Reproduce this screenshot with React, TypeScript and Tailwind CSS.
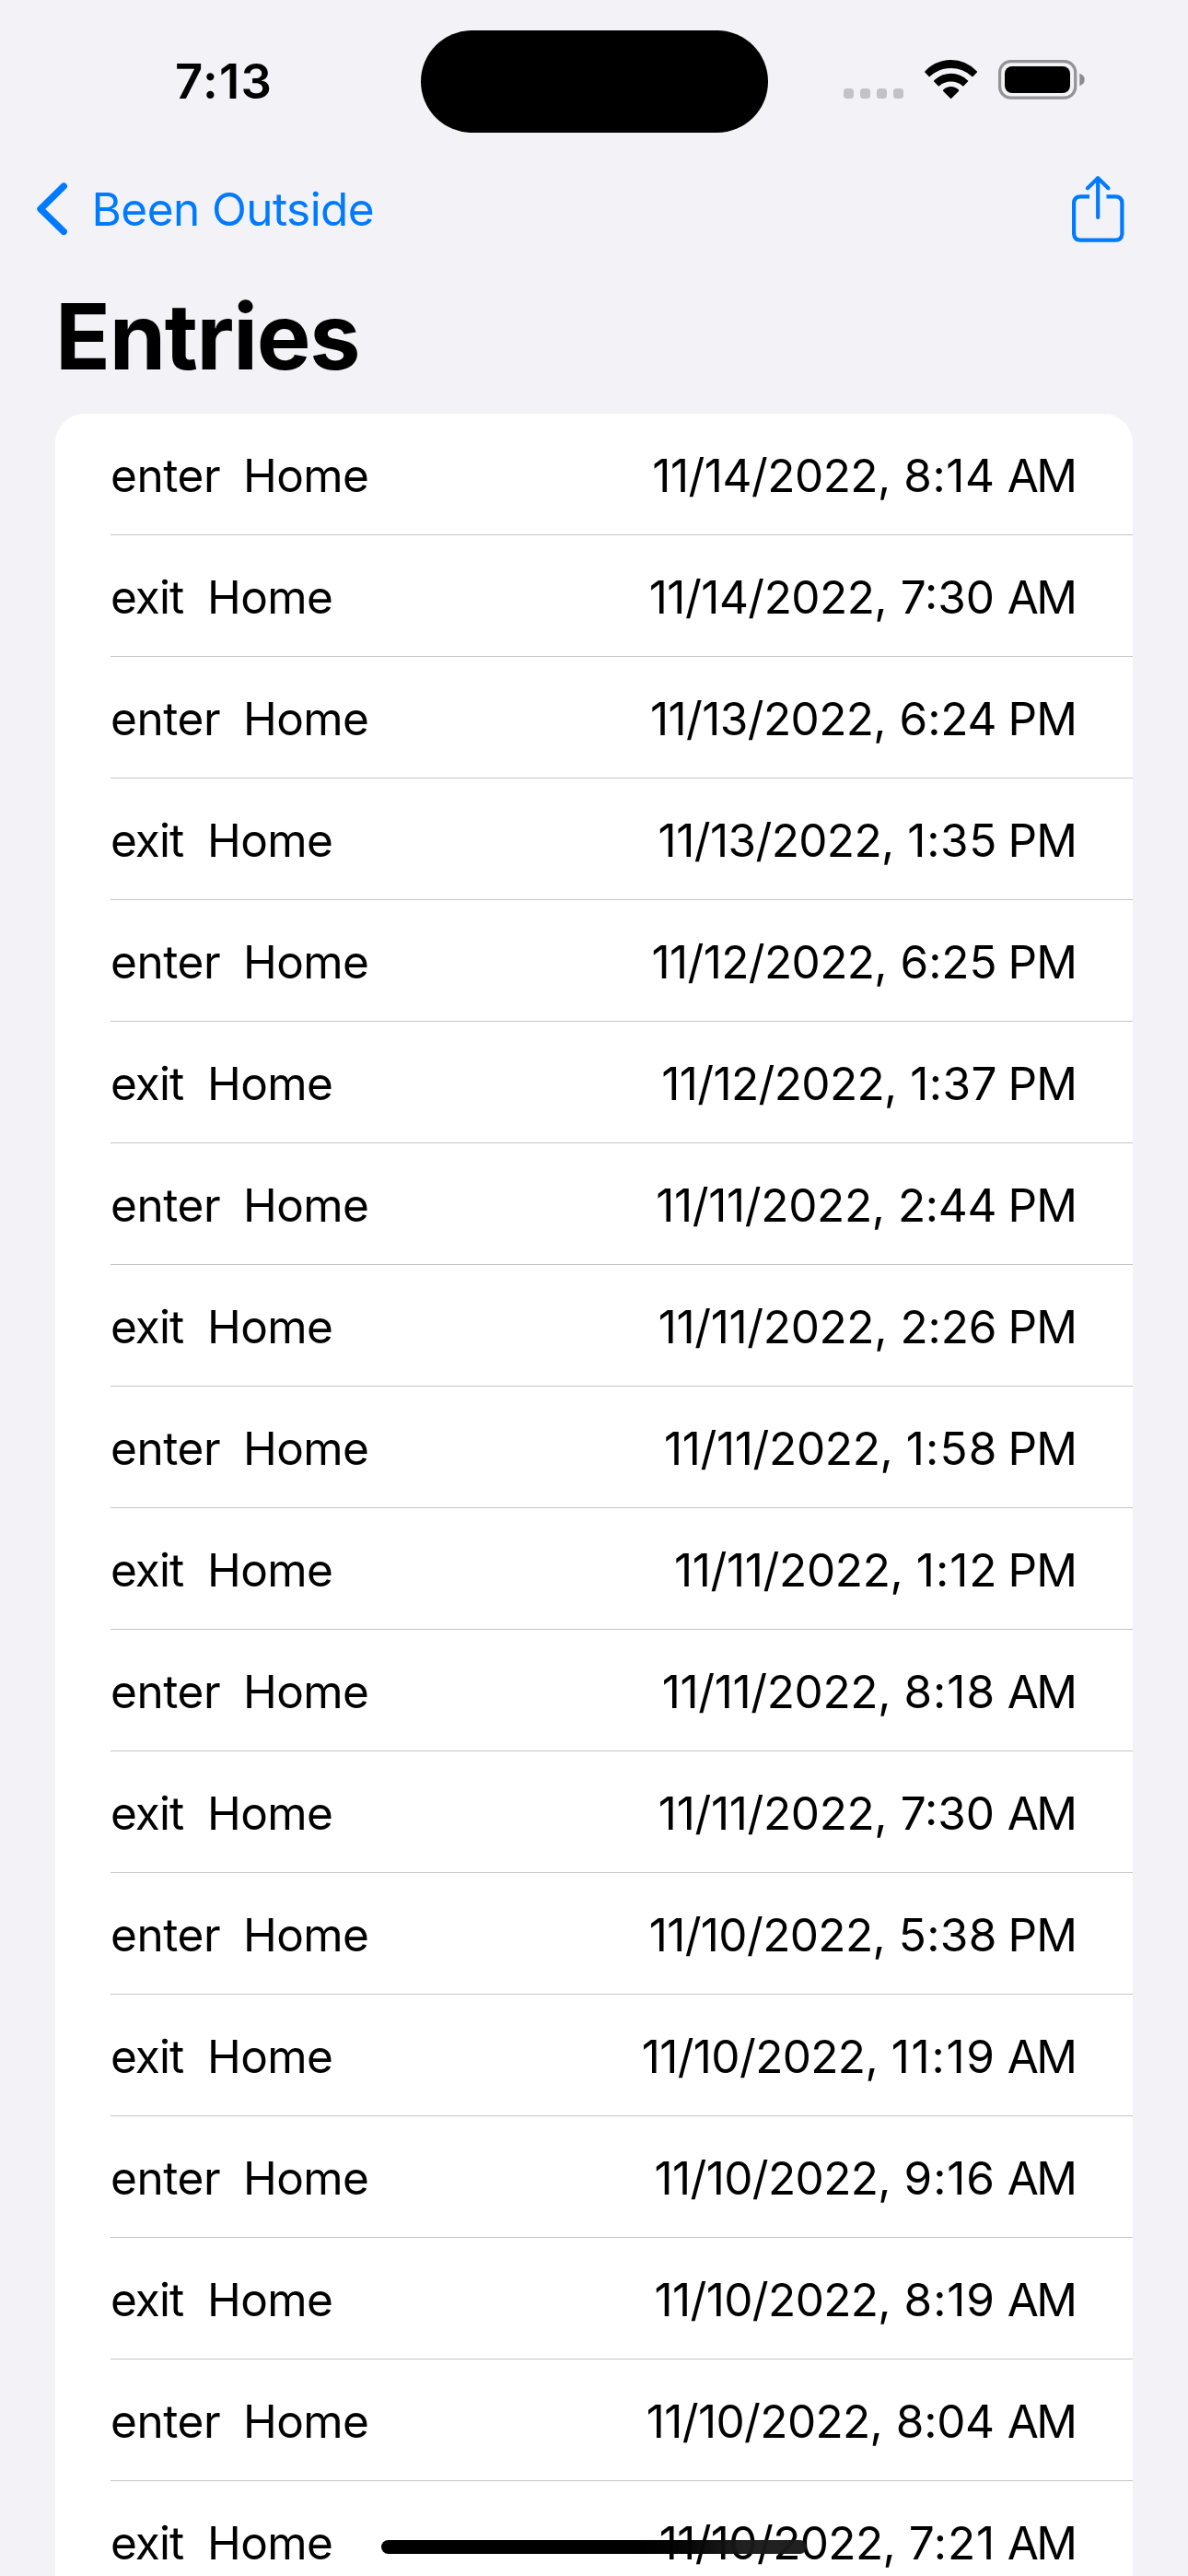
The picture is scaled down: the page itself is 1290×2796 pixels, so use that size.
type Action = "enter" | "exit";
type Meridiem = "AM" | "PM";

interface Entry {
  action: Action;
  day: string;
  time: string;
  meridiem: Meridiem;
  /** tracking of the time in px */
  tracking: number;
}

const dayTracking: Record<string, number> = {
  "11/14/2022,": -0.52,
  "11/13/2022,": -0.6,
  "11/12/2022,": -0.63,
  "11/11/2022,": -0.35,
  "11/10/2022,": -0.63,
};

const entries: Entry[] = [
  { action: "enter", day: "11/14/2022,", time: "8:14", meridiem: "AM", tracking: 0.6 },
  { action: "exit", day: "11/14/2022,", time: "7:30", meridiem: "AM", tracking: 0 },
  { action: "enter", day: "11/13/2022,", time: "6:24", meridiem: "PM", tracking: -0.15 },
  { action: "exit", day: "11/13/2022,", time: "1:35", meridiem: "PM", tracking: 0.7 },
  { action: "enter", day: "11/12/2022,", time: "6:25", meridiem: "PM", tracking: -0.1 },
  { action: "exit", day: "11/12/2022,", time: "1:37", meridiem: "PM", tracking: 0.4 },
  { action: "enter", day: "11/11/2022,", time: "2:44", meridiem: "PM", tracking: -0.3 },
  { action: "exit", day: "11/11/2022,", time: "2:26", meridiem: "PM", tracking: -0.1 },
  { action: "enter", day: "11/11/2022,", time: "1:58", meridiem: "PM", tracking: 1.2 },
  { action: "exit", day: "11/11/2022,", time: "1:12", meridiem: "PM", tracking: 1 },
  { action: "enter", day: "11/11/2022,", time: "8:18", meridiem: "AM", tracking: 1 },
  { action: "exit", day: "11/11/2022,", time: "7:30", meridiem: "AM", tracking: 0 },
  { action: "enter", day: "11/10/2022,", time: "5:38", meridiem: "PM", tracking: 0.4 },
  { action: "exit", day: "11/10/2022,", time: "11:19", meridiem: "AM", tracking: 1.75 },
  { action: "enter", day: "11/10/2022,", time: "9:16", meridiem: "AM", tracking: 0.9 },
  { action: "exit", day: "11/10/2022,", time: "8:19", meridiem: "AM", tracking: 0.9 },
  { action: "enter", day: "11/10/2022,", time: "8:04", meridiem: "AM", tracking: -0.3 },
  { action: "exit", day: "11/10/2022,", time: "7:21", meridiem: "AM", tracking: 0.8 },
];

/** Text whose trailing letter spacing is taken back, so boxes end at the last glyph. */
function Tracked({ value, text }: { value: number; text: string }) {
  return (
    <span style={{ letterSpacing: `${value}px`, marginRight: `${-value}px` }}>{text}</span>
  );
}

function StatusBar() {
  return (
    <div className="relative h-[177px] w-full shrink-0">
      <div className="flex h-[176px] items-center justify-between pr-[112px] pl-[190px]">
        <span className="text-[52.5px] leading-[64px] font-semibold tracking-[1.4px]">7:13</span>
        <div className="flex items-start pb-[3px]">
          <div className="mt-[31px] mr-[23px] flex gap-[7px]">
            {[0, 1, 2, 3].map((dot) => (
              <span key={dot} className="size-[11px] rounded-[3.5px] bg-[#c3c3c7]" />
            ))}
          </div>
          <svg width="58" height="43" viewBox="1004 65 58 43" className="mr-[22px]">
            <path d="M1004.3 77.4 Q1016.5 65 1032.6 65 Q1048.7 65 1060.9 77.4 Q1061.4 78 1060.9 78.6 L1056.5 83 Q1056 83.5 1055.4 83 Q1045.6 74 1032.6 74 Q1019.6 74 1009.8 83 Q1009.2 83.5 1008.7 83 L1004.3 78.6 Q1003.8 78 1004.3 77.4Z" />
            <path d="M1014.2 87.4 Q1022 79.7 1032.6 79.7 Q1043.2 79.7 1051 87.4 Q1051.6 88 1051 88.6 L1046.4 93.2 Q1045.8 93.8 1045.2 93.2 Q1039.8 88.6 1032.6 88.6 Q1025.4 88.6 1020 93.2 Q1019.4 93.8 1018.8 93.2 L1014.2 88.6 Q1013.6 88 1014.2 87.4Z" />
            <path d="M1024.2 97.6 Q1027.6 94 1032.6 94 Q1037.6 94 1041 97.6 Q1041.5 98.3 1041 98.9 L1033.2 106.7 Q1032.6 107.3 1032 106.7 L1024.2 98.9 Q1023.7 98.3 1024.2 97.6Z" />
          </svg>
          <svg width="94" height="43" viewBox="1084 65 94 43">
            <rect x="1085.6" y="66.6" width="82.1" height="39.6" rx="12" fill="none" stroke="#949497" strokeWidth="3.2" />
            <rect x="1091" y="72" width="71" height="29" rx="8" />
            <path d="M1172.3 79.8 Q1177.7 82 1177.7 86.5 Q1177.7 91 1172.3 93.3Z" fill="#8c8c8f" />
          </svg>
        </div>
      </div>
      <div className="absolute top-[33px] left-[456.5px] h-[111px] w-[377px] rounded-full bg-black" />
    </div>
  );
}

function NavigationBar() {
  return (
    <header className="flex h-[100px] shrink-0 items-center justify-between pr-[68px] pl-[39px] text-[#007aff]">
      <a className="flex items-center" href="#back">
        <svg width="36" height="60" viewBox="39 197 36 60" fill="none" stroke="currentColor" strokeWidth="7.4" strokeLinecap="round" strokeLinejoin="round">
          <path d="M69.2 202.2 L44 226.8 L69.2 251.4" />
        </svg>
        <span className="ml-[24.5px] text-[49.5px] leading-[60px] tracking-[-0.56px]">Been Outside</span>
      </a>
      <svg width="58" height="74" viewBox="1164 190 58 74" fill="none" stroke="currentColor" strokeWidth="4.2">
        <path d="M1183 213.4 H1173.5 Q1166.1 213.4 1166.1 220.8 V253 Q1166.1 260.6 1173.5 260.6 H1211 Q1218.4 260.6 1218.4 253 V220.8 Q1218.4 213.4 1211 213.4 H1201.5" />
        <path d="M1192.2 194 V236" strokeLinecap="round" />
        <path d="M1181 204.2 L1192.2 193.2 L1203.4 204.2" strokeLinecap="round" strokeLinejoin="round" />
      </svg>
    </header>
  );
}

function EntryRow({ entry }: { entry: Entry }) {
  const isMorning = entry.meridiem === "AM";
  return (
    <li className="ml-[60px] flex h-[132px] shrink-0 items-center justify-between border-b border-[#c6c6c8] pt-[3px] pr-[60px] text-[49.5px] leading-[60px] whitespace-nowrap">
      <div className="flex gap-6">
        {entry.action === "enter" ? (
          <span className="w-[120px] tracking-[-0.4px]">enter</span>
        ) : (
          <span className="w-[81px] tracking-[-0.9px]">exit</span>
        )}
        <span className="tracking-[-0.6px]">Home</span>
      </div>
      <div className="flex">
        <Tracked value={dayTracking[entry.day]} text={entry.day} />
        <span className="w-[14px]" />
        <Tracked value={entry.tracking} text={entry.time} />
        <span className={isMorning ? "w-[13.8px]" : "w-[11.9px]"} />
        <Tracked value={isMorning ? -2.7 : -0.7} text={entry.meridiem} />
      </div>
    </li>
  );
}

export default function App() {
  return (
    <div className="relative flex h-[2796px] w-[1290px] flex-col overflow-hidden bg-[#f2f2f7] font-['Inter',sans-serif] text-black">
      <StatusBar />
      <NavigationBar />
      <h1 className="h-[172px] shrink-0 pt-[28px] pl-[60px] text-[98.7px] leading-[120px] font-bold tracking-[-1.3px]">Entries</h1>
      <ul className="mx-[60px] flex min-h-0 flex-1 flex-col overflow-hidden rounded-t-[32px] bg-white">
        {entries.map((entry, index) => (
          <EntryRow key={index} entry={entry} />
        ))}
      </ul>
      <div className="absolute top-[2757px] left-[414px] h-[15px] w-[462px] rounded-full bg-linear-to-r from-black from-60% to-[#1a1a1a]/97 to-85%" />
    </div>
  );
}
